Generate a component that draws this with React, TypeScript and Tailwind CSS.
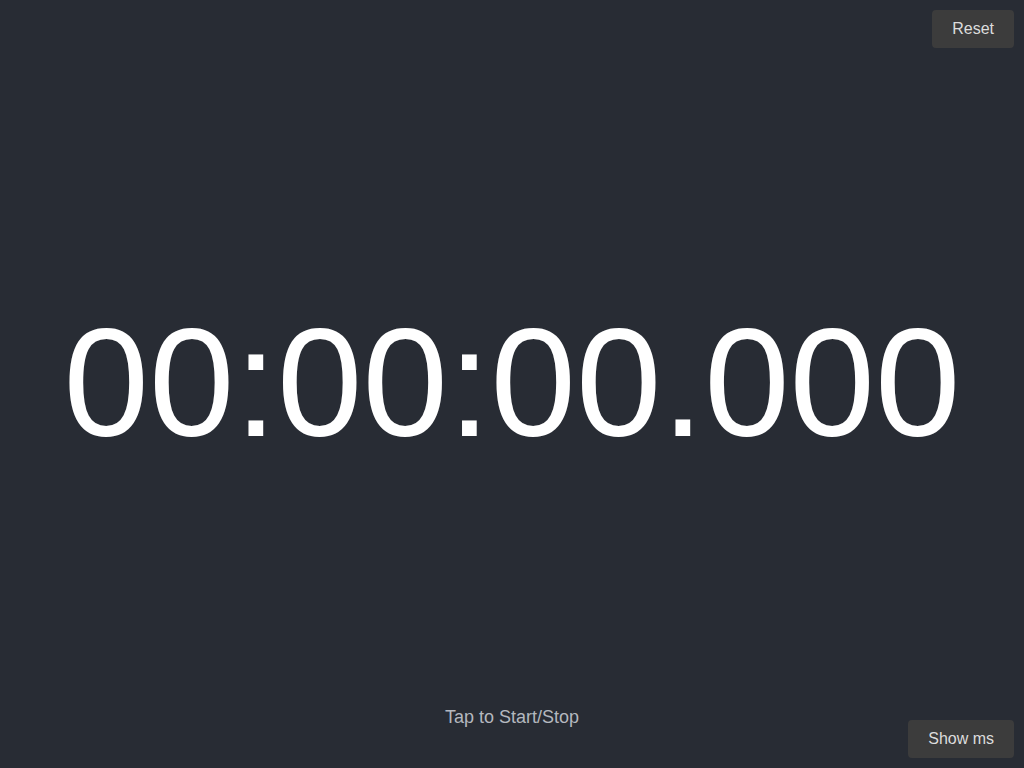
import { useEffect, useRef, useState } from 'react';

function pad(n: number, len = 2) {
  return String(n).padStart(len, '0');
}

function formatTime(ms: number, showMs: boolean) {
  const h = Math.floor(ms / 3600000);
  const m = Math.floor((ms % 3600000) / 60000);
  const s = Math.floor((ms % 60000) / 1000);
  const base = `${pad(h)}:${pad(m)}:${pad(s)}`;
  return showMs ? `${base}.${pad(ms % 1000, 3)}` : base;
}

export default function App() {
  const [elapsed, setElapsed] = useState(0);
  const [running, setRunning] = useState(false);
  const [showMs, setShowMs] = useState(true);
  const startRef = useRef(0);

  useEffect(() => {
    if (!running) return;
    startRef.current = Date.now() - elapsed;
    const id = setInterval(() => setElapsed(Date.now() - startRef.current), 31);
    return () => clearInterval(id);
    // eslint-disable-next-line react-hooks/exhaustive-deps
  }, [running]);

  const reset = (e: React.MouseEvent) => {
    e.stopPropagation();
    setRunning(false);
    setElapsed(0);
  };

  const toggleMs = (e: React.MouseEvent) => {
    e.stopPropagation();
    setShowMs(v => !v);
  };

  return (
    <div
      onClick={() => setRunning(r => !r)}
      className="relative flex h-screen w-screen select-none flex-col items-center justify-center overflow-hidden bg-[#282c34] font-['Liberation_Sans',Arial,sans-serif]"
    >
      <button
        onClick={reset}
        className="absolute right-[10px] top-[10px] rounded-[4px] bg-[#3c3c3c] px-5 py-2.5 text-base leading-[18px] text-[#dcdcdc]"
      >
        Reset
      </button>

      <div className="text-[15vw] leading-none text-white tabular-nums">
        {formatTime(elapsed, showMs)}
      </div>

      <div className="absolute bottom-[40px] left-0 right-0 text-center text-lg leading-[22px] text-[#b4b8bf]">
        Tap to Start/Stop
      </div>

      <button
        onClick={toggleMs}
        className="absolute bottom-[10px] right-[10px] rounded-[4px] bg-[#3c3c3c] px-5 py-2.5 text-base leading-[18px] text-[#dcdcdc]"
      >
        Show ms
      </button>
    </div>
  );
}
